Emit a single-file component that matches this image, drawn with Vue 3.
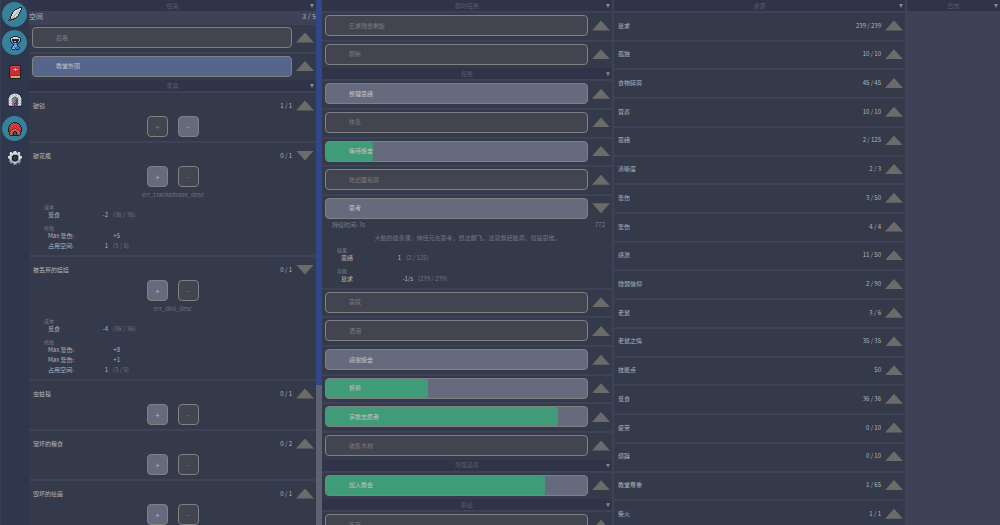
<script setup>
const palette = {
  k: '#20222f', w: '#d3d9db', g: '#a3abb3', d: '#67677a', n: '#8a5a45', o: '#d59a63',
  b: '#3c78c8', l: '#85b9e8', r: '#c42f38', s: '#e0464a', m: '#8f2a38', y: '#e2a64e',
  c: '#9a4f3d', t: '#c46a4c', p: '#54475c', u: '#8b7a8c'
}

const sprites = [
  {
    name: '任务', on: true, rows: [
      '...........kkk',
      '.........kkwwk',
      '.......kkwwwwk',
      '......kwwwwwk.',
      '.....kwwwwowk.',
      '....kwwwwowk..',
      '....kwwwowwk..',
      '...kwwwowwk...',
      '...kwwowwwk...',
      '..kwwowwok....',
      '..kwowook.....',
      '..koonkk......',
      '.knkkk........',
      'knk...........'
    ]
  },
  {
    name: '角色', on: true, rows: [
      '.....kkkkk....',
      '...kkwwwwwkk..',
      '..klwwwwwwwlk.',
      '..kwkkkkkkkwk.',
      '..klkkkkkkklk.',
      '..kblkllkklbk.',
      '...kbkkkkkbk..',
      '....kbllbbk...',
      '.....kbbbk....',
      '.....klllk....',
      '....klblbbk...',
      '...kblbbbbbk..',
      '...klllkbbbk..',
      '....kkk.kkk...'
    ]
  },
  {
    name: '书籍', on: false, rows: [
      '...kkkkkkkkkk.',
      '..ksssssssssk.',
      '.ksrrrrrrrrrk.',
      '.krrrrryrrrrk.',
      '.krrryywyyrrk.',
      '.krrrrryrrrrk.',
      '.krrrrrrrrrrk.',
      '.krrrrrrrrrrk.',
      '.krrrrrrrrrrk.',
      '.krrrrrrrrrrk.',
      '.krmmmmmmmmmk.',
      '.kryyyyyyyyyk.',
      '.kmyooooooook.',
      '..kkkkkkkkkkk.'
    ]
  },
  {
    name: '传送门', on: false, rows: [
      '....kddddk....',
      '..kdwwwgwwdk..',
      '.kwwgwwwgwwwk.',
      '.dwwwwggwwwwd.',
      'kwgwwddddwgwwk',
      'dwwwduuuudwwwd',
      'dwwguuuuppgwwd',
      'dgwwuuupppwwgd',
      'dwwguuuuppgwwd',
      'dwwwuuupppwwwd',
      'dgwguuppppgwgd',
      'dwwwuupuppwwwd',
      'kggguupppugggk',
      '.kkkk....kkkk.'
    ]
  },
  {
    name: '家园', on: true, rows: [
      '.....kkkk.....',
      '...kksrrskk...',
      '..kssrsrrsrk..',
      '.ksrsrrsrrsrk.',
      '.krsrrsrrsrrk.',
      'ksrrsrrsrrsrrk',
      'krsrrsmmsrrsrk',
      'krrsmmttmmrsrk',
      'kmrmttttttmrmk',
      'kmmttckkcttmmk',
      '.kttckppkcttk.',
      '.kctckppkctck.',
      '.kttckppkcctk.',
      '..kkkkkkkkkk..'
    ]
  },
  {
    name: '设置', on: false, rows: [
      '.....dwwd.....',
      '..ww.wwww.ww..',
      '.dwwwwwwwwwwd.',
      '..wwwgggggww..',
      '.dwwgkkkkdgwd.',
      'wwwgkk..kkgwww',
      'wwwgk....kgwww',
      'uwwgk....kgwwu',
      '.dwgkk..kkgwd.',
      '.dggdkkkkdggd.',
      '.uggggddggggu.',
      '..uuggwwgguu..',
      '..dd.uggu.dd..',
      '.....duud.....'
    ]
  }
]

const icons = sprites.map(s => ({
  name: s.name,
  on: s.on,
  pixels: s.rows.flatMap((row, y) =>
    [...row].map((c, x) => ({ x, y, fill: palette[c] })).filter(p => p.fill))
}))

const places = [
  { name: '后巷', state: 'off' },
  { name: '教堂外围', state: 'current' }
]

const furniture = [
  { name: '破镜', count: '1 / 1', add: false, remove: true },
  {
    name: '破花瓶', count: '0 / 1', add: true, remove: false, desc: 'err_crackedvase_desc',
    groups: [
      { label: '成本', lines: [{ name: '觅食', value: '-2', note: '(36 / 36)' }] },
      { label: '修改', lines: [{ name: 'Max 悲伤:', value: '+5', wide: true }, { name: '占用空间:', value: '1', note: '(3 / 5)' }] }
    ]
  },
  {
    name: '被丢弃的娃娃', count: '0 / 1', add: true, remove: false, desc: 'err_doll_desc',
    groups: [
      { label: '成本', lines: [{ name: '觅食', value: '-4', note: '(36 / 36)' }] },
      { label: '修改', lines: [{ name: 'Max 悲伤:', value: '+8', wide: true }, { name: 'Max 悲伤:', value: '+1', wide: true }, { name: '占用空间:', value: '1', note: '(3 / 5)' }] }
    ]
  },
  { name: '虫蛀毯', count: '0 / 1', add: true, remove: false },
  { name: '宠坏的粮食', count: '0 / 2', add: true, remove: false },
  { name: '毁坏的绘画', count: '0 / 1', add: true, remove: false }
]

const tasks = [
  { header: '即时任务' },
  { name: '乞求残羹剩饭', state: 'off' },
  { name: '刷新', state: 'off' },
  { header: '任务' },
  { name: '整理思绪', state: 'on' },
  { name: '休息', state: 'off' },
  { name: '等待施舍', state: 'on', progress: 18 },
  { name: '吃旧面包屑', state: 'off' },
  {
    name: '思考', state: 'on', duration: '持续时间: 3s', times: '772',
    desc: '大脑的健身课，神经元在思考，想法翻飞。这就像赶脑洞，但是思维。',
    groups: [
      { label: '结果', lines: [{ name: '思绪', value: '1', note: '(2 / 125)' }] },
      { label: '奔跑', lines: [{ name: '恳求', value: '-1/s', note: '(239 / 239)', wide: true }] }
    ]
  },
  { name: '哀叹', state: 'off' },
  { name: '洒泪', state: 'off' },
  { name: '感谢施舍', state: 'on' },
  { name: '祈祷', state: 'on', progress: 39 },
  { name: '宗教志愿者', state: 'on', progress: 89 },
  { name: '收集木材', state: 'off' },
  { header: '增强道具' },
  { name: '加入教会', state: 'on', progress: 84 },
  { header: '职业' },
  { name: '乞丐', state: 'off' }
]

const resources = [
  ['恳求', '239 / 239'], ['孤独', '10 / 10'], ['食物碎屑', '45 / 45'], ['营养', '10 / 10'],
  ['思绪', '2 / 125'], ['清晰度', '2 / 3'], ['悲伤', '3 / 50'], ['悲伤', '4 / 4'],
  ['感激', '11 / 50'], ['微弱信仰', '2 / 90'], ['老鼠', '3 / 6'], ['老鼠之情', '35 / 35'],
  ['技能点', '50'], ['觅食', '36 / 36'], ['疲劳', '0 / 10'], ['烦躁', '0 / 10'],
  ['教堂尊重', '1 / 65'], ['柴火', '1 / 1']
]
</script>

<template>
  <div class="game">
    <nav class="side">
      <div class="tabs">
        <button v-for="icon in icons" :key="icon.name" class="tab" :class="{ lit: icon.on }" :aria-label="icon.name">
          <svg viewBox="0 0 14 14" aria-hidden="true">
            <rect v-for="(p, i) in icon.pixels" :key="i" :x="p.x" :y="p.y" width="1" height="1" :fill="p.fill" />
          </svg>
        </button>
      </div>
    </nav>

    <section class="home">
      <div class="column home-list">
        <button class="header"><span>住房</span><i class="caret"></i></button>
        <div class="space"><span>空间</span><span>3 / 5</span></div>
        <div v-for="p in places" :key="p.name" class="row">
          <div class="line">
            <button class="action" :class="p.state"><span class="text">{{ p.name }}</span></button>
            <button class="arrow" aria-label="展开"></button>
          </div>
        </div>
        <button class="header"><span>家具</span><i class="caret"></i></button>
        <article v-for="f in furniture" :key="f.name" class="row fixed">
          <div class="line">
            <span class="name">{{ f.name }}</span>
            <span class="count">{{ f.count }}</span>
            <button class="arrow" :class="{ down: f.desc }" aria-label="展开"></button>
          </div>
          <div class="steps">
            <button class="step" :class="f.add ? 'on' : 'off'">+</button>
            <button class="step" :class="f.remove ? 'on' : 'off'">-</button>
          </div>
          <template v-if="f.desc">
            <p class="desc">{{ f.desc }}</p>
            <div v-for="g in f.groups" :key="g.label" class="group">
              <div class="label">{{ g.label }}</div>
              <div v-for="(l, i) in g.lines" :key="i" class="effect">
                <span class="what">{{ l.name }}</span>
                <span class="value" :class="{ wide: l.wide }">{{ l.value }}</span>
                <span class="note">{{ l.note }}</span>
              </div>
            </div>
          </template>
        </article>
      </div>
      <div class="track"><div class="thumb"></div></div>
    </section>

    <section class="column task-list">
      <template v-for="(t, n) in tasks" :key="n">
        <button v-if="t.header" class="header"><span>{{ t.header }}</span><i class="caret"></i></button>
        <div v-else class="row" :class="{ fixed: t.desc }">
          <div class="line">
            <button class="action" :class="t.state">
              <i v-if="t.progress" class="fill" :style="{ width: t.progress + '%' }"></i>
              <span class="text">{{ t.name }}</span>
            </button>
            <button class="arrow" :class="{ down: t.desc }" aria-label="展开"></button>
          </div>
          <template v-if="t.desc">
            <div class="meta"><span>{{ t.duration }}</span><span>{{ t.times }}</span></div>
            <p class="desc">{{ t.desc }}</p>
            <div v-for="g in t.groups" :key="g.label" class="group">
              <div class="label">{{ g.label }}</div>
              <div v-for="(l, i) in g.lines" :key="i" class="effect">
                <span class="what">{{ l.name }}</span>
                <span class="value" :class="{ wide: l.wide }">{{ l.value }}</span>
                <span class="note">{{ l.note }}</span>
              </div>
            </div>
          </template>
        </div>
      </template>
    </section>

    <section class="column resource-list">
      <button class="header"><span>资源</span><i class="caret"></i></button>
      <div v-for="(r, i) in resources" :key="i" class="row">
        <div class="line">
          <span class="name">{{ r[0] }}</span>
          <span class="count">{{ r[1] }}</span>
          <button class="arrow" aria-label="展开"></button>
        </div>
      </div>
    </section>

    <section class="column log">
      <button class="header"><span>日志</span><i class="caret"></i></button>
    </section>
  </div>
</template>

<style>
body {
  background: #3d4257;
}
</style>

<style scoped>
.game {
  display: grid;
  grid-template-columns: 29px 293fr 290fr 293fr 95fr;
  height: 100vh;
  overflow: hidden;
  background: #3d4257;
  color: #b2b4b9;
  font: 6px/10px "Noto Sans CJK SC", "Noto Sans", sans-serif;
}
.game * {
  box-sizing: border-box;
}
button {
  display: block;
  margin: 0;
  padding: 0;
  border: 0;
  background: none;
  color: inherit;
  font: inherit;
  cursor: pointer;
}
.side {
  height: 100vh;
  background: #2f374c;
  border-left: 1px solid #394056;
}
.tabs {
  display: grid;
  grid-template-rows: repeat(6, 1fr);
  place-items: center;
  height: 172px;
  padding-right: 1px;
}
.tab {
  display: grid;
  place-items: center;
  width: 25px;
  height: 25px;
  border-radius: 50%;
}
.tab.lit {
  background: #37819a;
}
.tab svg {
  width: 14px;
  height: 14px;
}
.home {
  display: flex;
  min-width: 0;
  min-height: 0;
}
.column {
  display: flex;
  flex-direction: column;
  min-width: 0;
}
.home-list {
  flex: 1;
  height: calc(100vh + 4px);
}
.task-list {
  height: calc(100vh + 14px);
}
.resource-list {
  height: calc(100vh + 3px);
  padding-left: 2px;
}
.log {
  padding-left: 2px;
}
.track {
  width: 6px;
  height: 100vh;
  background: #5d6170;
}
.thumb {
  height: 73.3%;
  background: #30478a;
}
.header {
  position: relative;
  flex: none;
  width: 100%;
  height: 11px;
  background: #2f3448;
  color: #5b5f6c;
  text-align: center;
}
.caret {
  position: absolute;
  top: 4px;
  right: 2px;
  width: 4px;
  height: 4px;
  background: #85868a;
  clip-path: polygon(0 0, 100% 0, 50% 100%);
}
.space {
  display: flex;
  flex: none;
  justify-content: space-between;
  height: 12px;
  font-size: 7px;
  line-height: 10px;
}
.row {
  flex: 1 1 28px;
  min-height: 0;
  padding: 2px 2px 4px 3px;
  background: #353a4b;
  border-top: 2px solid #3d4257;
}
.row.fixed {
  flex: none;
}
.line {
  display: flex;
  align-items: center;
  gap: 4px;
  height: 21px;
}
.name {
  flex: 1;
  padding-left: 1px;
}
.action {
  position: relative;
  flex: 1;
  height: 21px;
  overflow: hidden;
  border: 1px solid #808183;
  border-radius: 4px;
  text-align: left;
}
.off {
  background: #42454f;
  color: #7b7d85;
}
.on {
  background: #656b7d;
}
.current {
  background: #56658c;
}
.fill {
  position: absolute;
  inset: 0 auto 0 0;
  background: #3f9b78;
  border-radius: 0 2px 2px 0;
}
.text {
  position: relative;
  padding-left: 23px;
}
.on .text,
.current .text {
  color: #c2c4ca;
}
.arrow {
  width: 18px;
  height: 10px;
  background: #6b6b6a;
  clip-path: polygon(50% 0, 100% 100%, 0 100%);
}
.arrow.down {
  clip-path: polygon(0 0, 100% 0, 50% 100%);
}
.steps {
  display: flex;
  justify-content: center;
  gap: 10px;
}
.step {
  width: 21px;
  height: 21px;
  border: 1px solid #808183;
  border-radius: 4px;
  font-size: 8px;
  line-height: 16px;
}
.meta {
  display: flex;
  justify-content: space-between;
  height: 11px;
  padding: 1px 5px 0 7px;
  color: #7b7e88;
}
.desc {
  height: 16px;
  margin: 0;
  color: #6f737e;
  line-height: 16px;
  text-align: center;
}
.group {
  padding-left: 12px;
}
.group + .group {
  margin-top: 4px;
}
.label {
  color: #7b7e88;
  font-size: 5px;
  line-height: 7px;
}
.effect {
  display: flex;
  height: 10px;
  padding-left: 4px;
}
.what {
  width: 44px;
}
.value {
  width: 16px;
  text-align: right;
}
.value.wide {
  width: 28px;
}
.note {
  margin-left: 5px;
  color: #6f737e;
}
</style>
